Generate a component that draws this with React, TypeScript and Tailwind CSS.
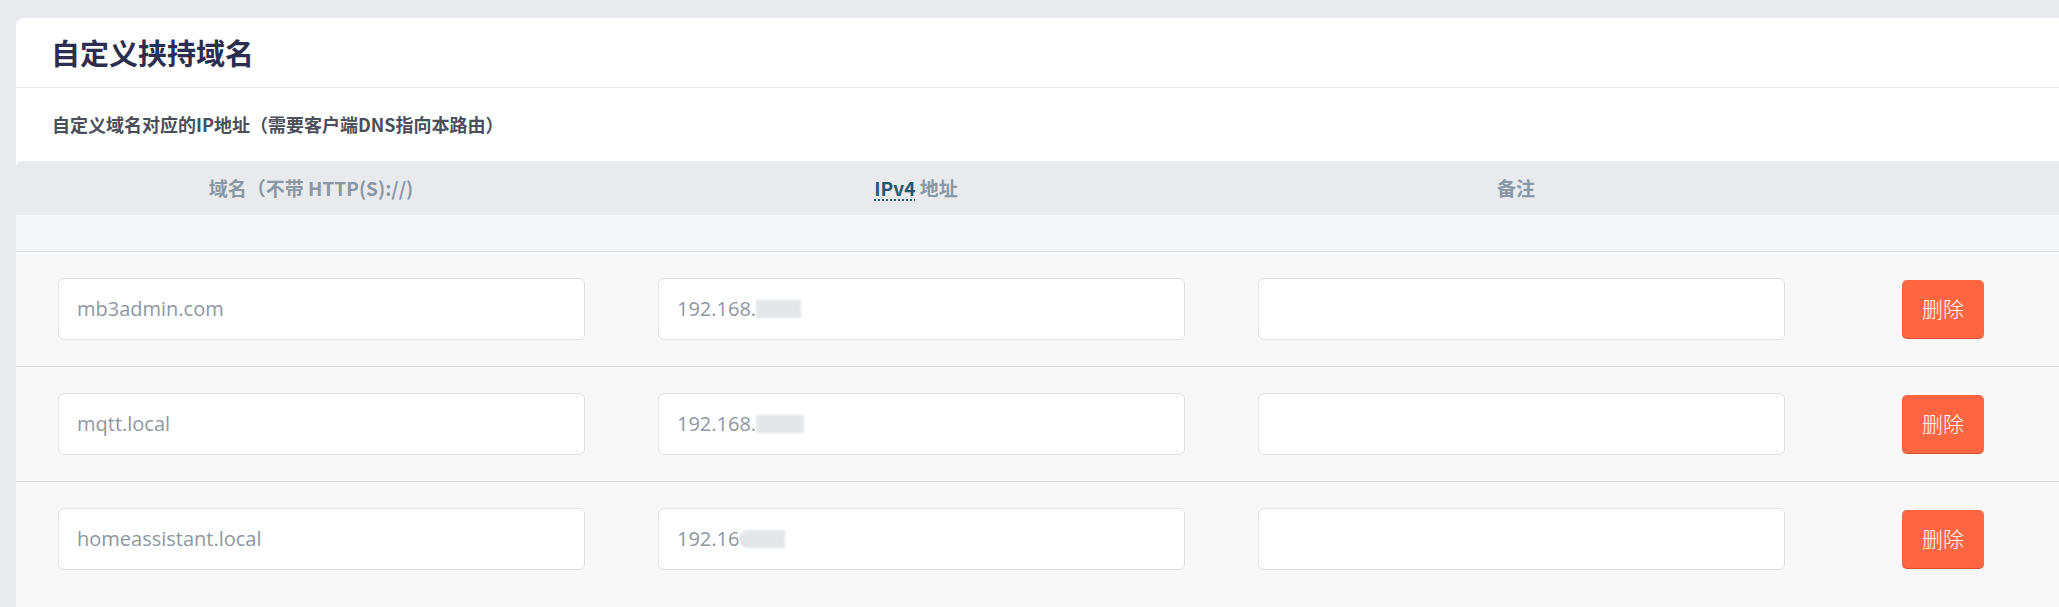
const rows = [
  { domain: "mb3admin.com", ip: "192.168.", blur: "w-[45px]" },
  { domain: "mqtt.local", ip: "192.168.", blur: "w-[48px]" },
  { domain: "homeassistant.local", ip: "192.16", blur: "w-[46px] rounded-l-full" },
];

const cjk = "font-['Noto_Sans_CJK_SC',sans-serif]";
const latin = "font-['Open_Sans','Noto_Sans_CJK_SC',sans-serif]";

function Field({ children }: { children?: React.ReactNode }) {
  return (
    <div
      className={`flex h-[62px] w-[527px] items-center rounded-md border border-[#dfe1e5] bg-white px-[18px] text-[20px] text-[#8d97a2] ${latin}`}
    >
      {children}
    </div>
  );
}

export default function App() {
  return (
    <div className="h-[607px] w-full overflow-hidden bg-[#e9eaed] pl-4 pt-[18px]">
      <div className={`w-[2054px] rounded-tl-lg bg-white ${cjk}`}>
        <div className="flex h-[70px] items-center border-b border-[#e4e5e7] pl-[35px]">
          <h1 className="text-[29px] font-bold text-[#2c2e4f]">自定义挟持域名</h1>
        </div>
        <div className="flex h-[73px] items-center pl-[36px]">
          <p className="text-[18px] font-bold text-[#4a4f5b]">
            自定义域名对应的IP地址（需要客户端DNS指向本路由）
          </p>
        </div>

        <div className="grid h-[54px] grid-cols-[600px_600px_600px_254px] items-center rounded-tl-md bg-[#e8eaed] text-center text-[19px] font-bold text-[#8a97a4]">
          <div className="pr-[10px]">域名（不带 HTTP(S)://)</div>
          <div>
            <abbr
              title="Internet Protocol version 4"
              className="text-[#1d5a6d] underline decoration-dotted decoration-[#1d5a6d] underline-offset-4"
            >
              IPv4
            </abbr>{" "}
            地址
          </div>
          <div>备注</div>
          <div />
        </div>
        <div className="h-[36px] bg-[#f3f7fa]" />

        {rows.map((r) => (
          <div
            key={r.domain}
            className="grid grid-cols-[600px_600px_600px_254px] items-center border-t border-[#dedfe0] bg-[#f8f8f8] py-[26px]"
          >
            <div className="pl-[42px]">
              <Field>{r.domain}</Field>
            </div>
            <div className="pl-[42px]">
              <Field>
                <span>{r.ip}</span>
                <span className={`inline-block h-[18px] bg-[#e4e6e9] blur-[1px] ${r.blur}`} />
              </Field>
            </div>
            <div className="pl-[42px]">
              <Field />
            </div>
            <div className="flex justify-center">
              <button className="h-[59px] w-[82px] rounded-[5px] border-b border-[#d5523a] bg-[#fe6642] text-[21px] font-light text-white">
                删除
              </button>
            </div>
          </div>
        ))}
        <div className="h-[40px] bg-[#f8f8f8]" />
      </div>
    </div>
  );
}
